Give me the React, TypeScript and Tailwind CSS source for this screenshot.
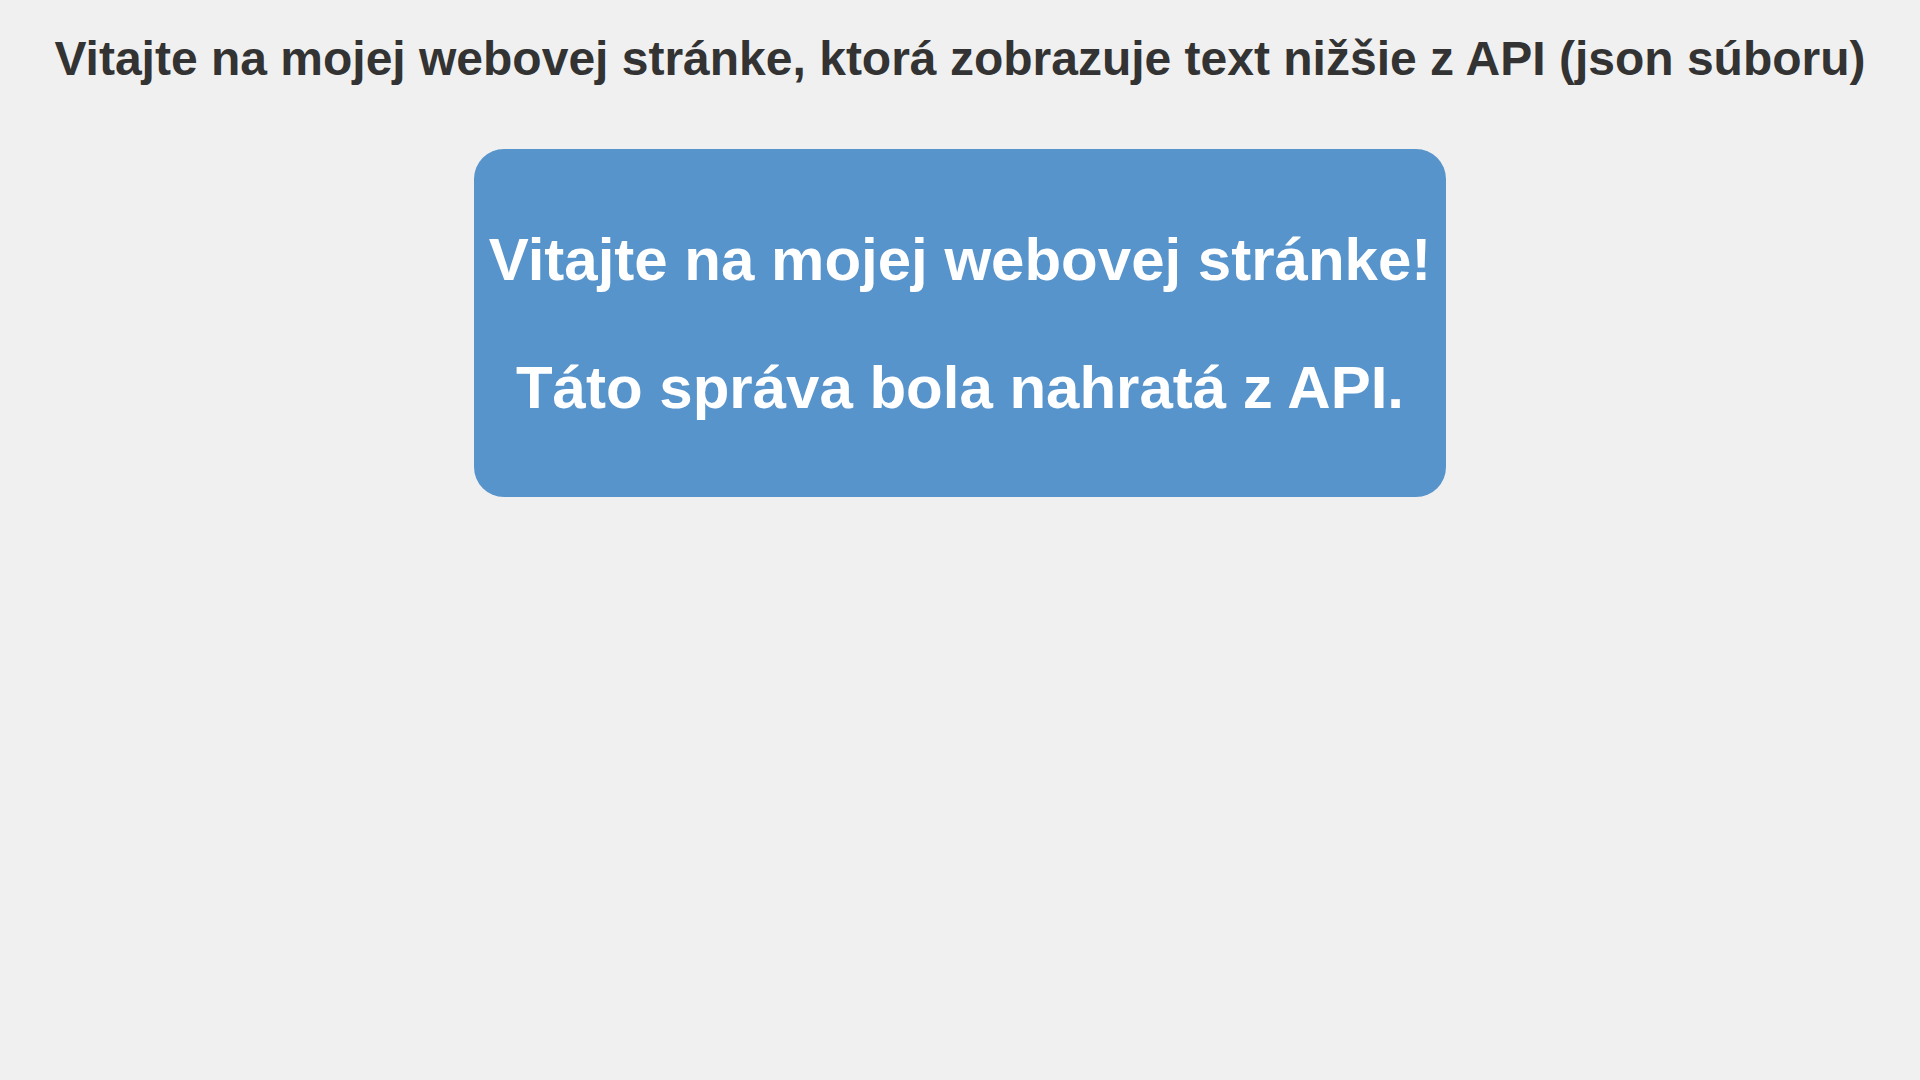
export default function App() {
  return (
    <div className="min-h-screen bg-[#f0f0f0] font-['Liberation_Sans',Arial,sans-serif] text-center">
      <h1 className="pt-[31px] text-[48px] leading-[55px] font-bold text-[#333333]">
        Vitajte na mojej webovej stránke, ktorá zobrazuje text nižšie z API (json súboru)
      </h1>
      <div className="mt-[63px] flex justify-center">
        <div className="rounded-[30px] bg-[#5794cc] px-[15px] py-4 text-white">
          <p className="mt-[61px] mb-[60px] text-[60px] leading-[68px] font-bold">Vitajte na mojej webovej stránke!</p>
          <p className="mt-[60px] mb-[59px] text-[60px] leading-[68px] font-bold">Táto správa bola nahratá z API.</p>
        </div>
      </div>
    </div>
  );
}
